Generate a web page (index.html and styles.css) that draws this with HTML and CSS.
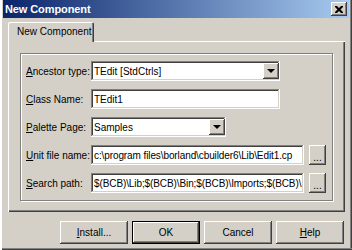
FILE: index.html
```html
<!DOCTYPE html>
<html lang="en">
<head>
    <meta charset="UTF-8">
    <title>New Component</title>
    <link rel="stylesheet" href="styles.css">
</head>
<body>
    <div class="window">
        <div class="titlebar">
            <span class="title">New Component</span>
            <button class="close" aria-label="Close">
                <svg width="8" height="7" viewBox="0 0 8 7"><path d="M0 0h2l2 2 2-2h2v1l-2.5 2.5L8 6v1H6L4 5 2 7H0V6l2.5-2.5L0 1z" fill="#000"/></svg>
            </button>
        </div>

        <div class="tabs">
            <div class="tab">New Component</div>
        </div>

        <div class="panel">
            <div class="group">
                <div class="row">
                    <label class="label"><u>A</u>ncestor type:</label>
                    <div class="field combo wide">
                        <span class="value">TEdit [StdCtrls]</span>
                        <span class="drop"><i class="arrow"></i></span>
                    </div>
                </div>
                <div class="row">
                    <label class="label"><u>C</u>lass Name:</label>
                    <div class="field wide"><span class="value">TEdit1</span></div>
                </div>
                <div class="row">
                    <label class="label"><u>P</u>alette Page:</label>
                    <div class="field combo short">
                        <span class="value">Samples</span>
                        <span class="drop"><i class="arrow"></i></span>
                    </div>
                </div>
                <div class="row">
                    <label class="label"><u>U</u>nit file name:</label>
                    <div class="field path"><span class="value">c:\program files\borland\cbuilder6\Lib\Edit1.cp</span></div>
                    <button class="browse">...</button>
                </div>
                <div class="row">
                    <label class="label"><u>S</u>earch path:</label>
                    <div class="field path"><span class="value">$(BCB)\Lib;$(BCB)\Bin;$(BCB)\Imports;$(BCB)\</span></div>
                    <button class="browse">...</button>
                </div>
            </div>
        </div>

        <div class="buttons">
            <button class="btn"><u>I</u>nstall...</button>
            <button class="btn default">OK</button>
            <button class="btn">Cancel</button>
            <button class="btn"><u>H</u>elp</button>
        </div>
    </div>
</body>
</html>
```

FILE: styles.css
```css
body {
    margin: 0;
    font-family: "Liberation Sans", Arial, sans-serif;
    font-size: 10px;
    color: #000;
    background: #d4d0c8;
}

.window {
    width: 352px;
    height: 250px;
    box-sizing: border-box;
    background: #d4d0c8;
    box-shadow: inset 2px 0 #fff, inset 1px 0 #d4d0c8, inset 0 -1px #404040, inset 0 -2px #808080, inset -1px 0 #404040, inset -2px 0 #808080;
    overflow: hidden;
}

.titlebar {
    height: 18px;
    margin: 0 3px;
    display: flex;
    align-items: center;
    justify-content: space-between;
    padding: 0 2px 0 2px;
    background: linear-gradient(to right, #0a246a, #a6caf0);
}

.title {
    color: #fff;
    font-weight: bold;
    font-size: 11px;
    letter-spacing: -0.1px;
}

.close {
    width: 16px;
    height: 14px;
    padding: 0;
    border: none;
    background: #d4d0c8;
    display: flex;
    align-items: center;
    justify-content: center;
    box-shadow: inset -1px -1px #404040, inset 1px 1px #fff, inset -2px -2px #808080, inset 2px 2px #d4d0c8;
}

.tabs {
    display: flex;
    margin: 4px 0 0 8px;
}

.tab {
    position: relative;
    width: 86px;
    height: 20px;
    margin-bottom: -1px;
    box-sizing: border-box;
    padding: 4px 0 0 9px;
    background: #d4d0c8;
    border-radius: 2px 2px 0 0;
    box-shadow: inset 1px 1px #fff, inset -1px 0 #404040, inset -2px 0 #808080;
}

.panel {
    width: 337px;
    height: 171px;
    margin-left: 8px;
    box-sizing: border-box;
    padding: 12px 0 0 12px;
    box-shadow: inset 1px 1px #fff, inset -1px -1px #404040, inset -2px -2px #808080;
}

.group {
    width: 313px;
    height: 148px;
    box-sizing: border-box;
    padding: 7px 0 0 5px;
    border: 1px solid #808080;
    box-shadow: 1px 1px #fff, inset 1px 1px #fff;
    display: flex;
    flex-direction: column;
    gap: 8px;
}

.row {
    display: flex;
    align-items: center;
    height: 20px;
}

.label {
    width: 65px;
    white-space: nowrap;
}

.field {
    height: 20px;
    box-sizing: border-box;
    padding: 2px 2px 2px 3px;
    background: #fff;
    display: flex;
    align-items: center;
    overflow: hidden;
    box-shadow: inset -1px -1px #fff, inset 1px 1px #808080, inset -2px -2px #d4d0c8, inset 2px 2px #404040;
}

.value {
    flex: 1;
    white-space: nowrap;
    overflow: hidden;
}

.path .value {
    letter-spacing: -0.1px;
}

.wide {
    width: 189px;
}

.short {
    width: 135px;
}

.path {
    width: 213px;
}

.drop {
    width: 16px;
    height: 16px;
    flex: none;
    margin-right: -1px;
    background: #d4d0c8;
    display: flex;
    align-items: center;
    justify-content: center;
    box-shadow: inset -1px -1px #404040, inset 1px 1px #fff, inset -2px -2px #808080, inset 2px 2px #d4d0c8;
}

.arrow {
    width: 0;
    height: 0;
    border-left: 4px solid transparent;
    border-right: 4px solid transparent;
    border-top: 4px solid #000;
}

.browse {
    width: 17px;
    height: 20px;
    margin-left: 5px;
    padding: 4px 0 0;
    border: none;
    background: #d4d0c8;
    font-family: inherit;
    font-size: 10px;
    box-shadow: inset -1px -1px #404040, inset 1px 1px #fff, inset -2px -2px #808080, inset 2px 2px #d4d0c8;
}

.buttons {
    display: flex;
    gap: 4px;
    margin: 9px 0 0 60px;
}

.btn {
    width: 68px;
    height: 23px;
    padding: 0;
    border: none;
    background: #d4d0c8;
    font-family: inherit;
    font-size: 10px;
    color: #000;
    box-shadow: inset -1px -1px #404040, inset 1px 1px #fff, inset -2px -2px #808080, inset 2px 2px #d4d0c8;
}

.btn.default {
    box-shadow: inset 0 0 0 1px #000, inset -2px -2px #404040, inset 2px 2px #fff, inset -3px -3px #808080;
}
```
